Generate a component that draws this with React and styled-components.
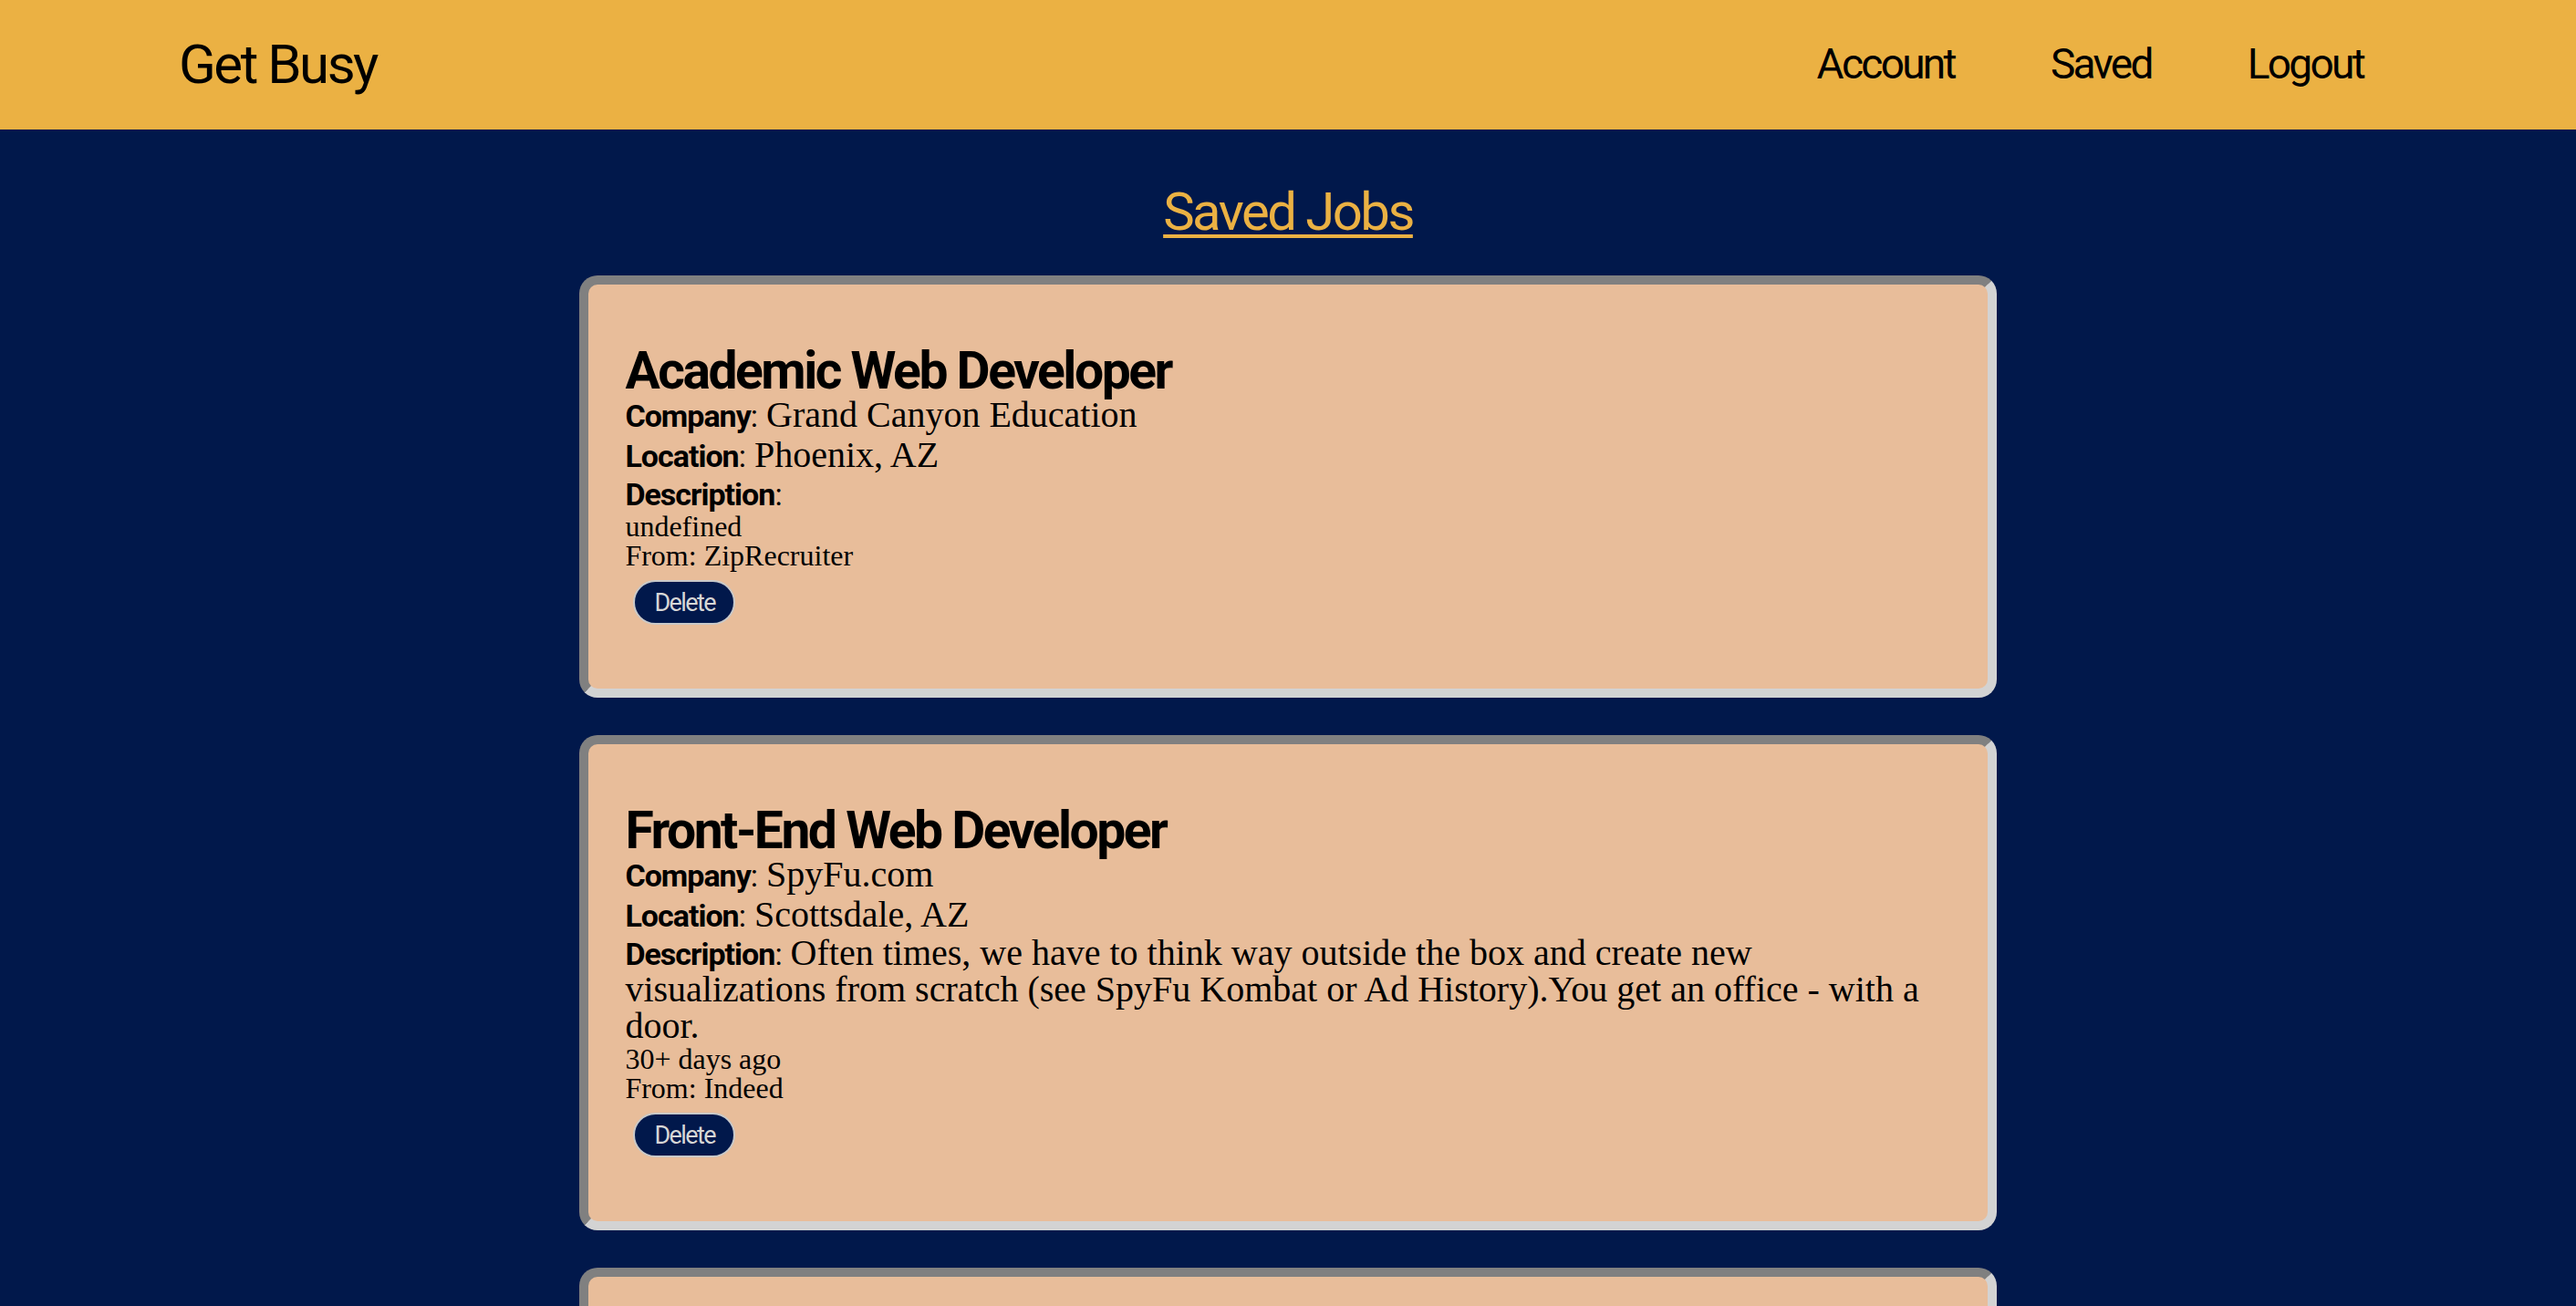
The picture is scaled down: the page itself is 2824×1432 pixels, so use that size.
import React from "react";
import styled, { createGlobalStyle } from "styled-components";

// no condensed face is installed, so Roboto is tightened with letter-spacing
const sans = `Roboto, "Noto Sans", sans-serif`;
const serif = `"Liberation Serif", "Times New Roman", serif`;

const GlobalStyle = createGlobalStyle`
  html {
    scrollbar-width: none;
  }
  body {
    margin: 0;
    background: #01184b;
    font-family: ${serif};
  }
`;

const Header = styled.header`
  height: 142px;
  box-sizing: border-box;
  padding: 0 233px 2px 196px;
  background: #ebb143;
  display: flex;
  align-items: center;
  justify-content: space-between;
`;

const Logo = styled.div`
  font-family: ${sans};
  font-size: 60px;
  letter-spacing: -2.5px;
  color: #000;
`;

const Nav = styled.nav`
  display: flex;
  gap: 105px;
`;

const NavLink = styled.a`
  font-family: ${sans};
  font-size: 46px;
  letter-spacing: -2.7px;
  color: #000;
  text-decoration: none;
  cursor: pointer;
`;

const Main = styled.main`
  padding-top: 53px;
`;

const PageTitle = styled.h1`
  margin: 0 0 33px;
  font-family: ${sans};
  font-weight: normal;
  font-size: 58px;
  letter-spacing: -2.5px;
  line-height: 74px;
  color: #ebb143;
  text-align: center;
  text-decoration: underline;
  text-decoration-thickness: 4px;
  text-underline-offset: 5px;
`;

const Card = styled.div`
  width: 55%;
  box-sizing: border-box;
  margin: 0 auto 41px;
  padding: 40px;
  background: #e8bd9a;
  border: 10px solid;
  border-color: #808080 #d3d3d3 #d3d3d3 #808080;
  border-radius: 20px;
`;

const JobTitle = styled.h2`
  margin: 28px 0 0;
  font-family: ${sans};
  font-weight: bold;
  font-size: 57px;
  letter-spacing: -2.5px;
  line-height: 53px;
  color: #000;
`;

const Field = styled.div`
  font-family: ${serif};
  font-size: 40px;
  line-height: ${(p) => p.lh || 44}px;
  color: #000;
`;

const Key = styled.span`
  font-family: ${sans};
  font-size: 34px;
  line-height: 1;
  letter-spacing: -1px;

  b {
    font-weight: bold;
  }
`;

const Small = styled.div`
  font-family: ${serif};
  font-size: 32px;
  line-height: 32px;
  color: #000;
`;

const DeleteButton = styled.button`
  display: block;
  margin: 11px 0 30px 9px;
  height: 49px;
  padding: 0 20px 0 21px;
  background: #01184b;
  color: #d6d6d6;
  border: 2px solid #c9c9c9;
  border-radius: 25px;
  font-family: ${sans};
  font-size: 27px;
  letter-spacing: -1.6px;
  cursor: pointer;
`;

const jobs = [
  {
    title: "Academic Web Developer",
    company: "Grand Canyon Education",
    location: "Phoenix, AZ",
    description: "",
    posted: "undefined",
    source: "ZipRecruiter",
  },
  {
    title: "Front-End Web Developer",
    company: "SpyFu.com",
    location: "Scottsdale, AZ",
    description:
      "Often times, we have to think way outside the box and create new visualizations from scratch (see SpyFu Kombat or Ad History).You get an office - with a door.",
    posted: "30+ days ago",
    source: "Indeed",
  },
  {
    title: "Junior Web Developer",
    company: "Isos Technology",
    location: "Tempe, AZ",
    description: "",
    posted: "undefined",
    source: "ZipRecruiter",
  },
];

function JobCard({ job }) {
  return (
    <Card>
      <JobTitle>{job.title}</JobTitle>
      <Field>
        <Key>
          <b>Company</b>:
        </Key>{" "}
        {job.company}
      </Field>
      <Field>
        <Key>
          <b>Location</b>:
        </Key>{" "}
        {job.location}
      </Field>
      <Field lh={40}>
        <Key>
          <b>Description</b>:
        </Key>{" "}
        {job.description}
      </Field>
      <Small>{job.posted}</Small>
      <Small>From: {job.source}</Small>
      <DeleteButton>Delete</DeleteButton>
    </Card>
  );
}

export default function App() {
  return (
    <>
      <GlobalStyle />
      <Header>
        <Logo>Get Busy</Logo>
        <Nav>
          <NavLink>Account</NavLink>
          <NavLink>Saved</NavLink>
          <NavLink>Logout</NavLink>
        </Nav>
      </Header>
      <Main>
        <PageTitle>Saved Jobs</PageTitle>
        {jobs.map((job, idx) => (
          <JobCard key={idx} job={job} />
        ))}
      </Main>
    </>
  );
}
